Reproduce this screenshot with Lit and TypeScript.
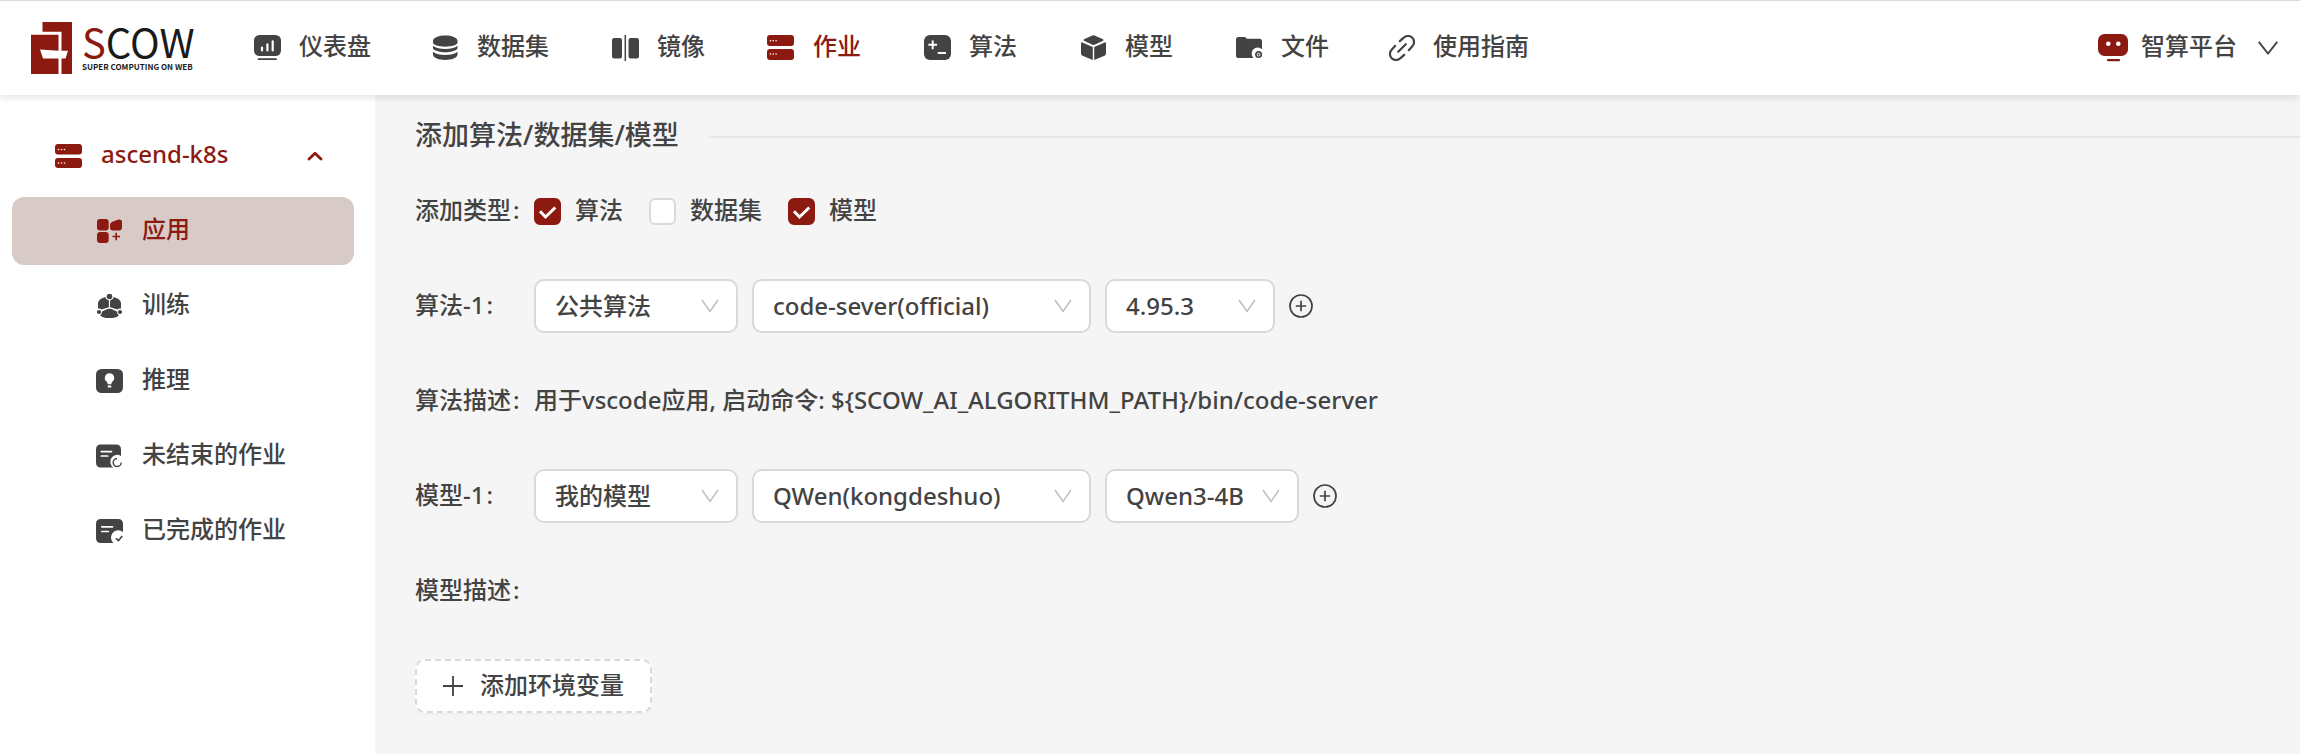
import { LitElement, html, svg, css, nothing, TemplateResult, SVGTemplateResult } from "lit";
import { customElement, property, state } from "lit/decorators.js";
import { classMap } from "lit/directives/class-map.js";

interface Icon {
  width: number;
  height: number;
  body: SVGTemplateResult;
}

const serverBody = svg`
  <rect x="2" width="27" height="11" rx="3"/>
  <rect x="2" y="14" width="27" height="11" rx="3"/>
  <g fill="#fff">
    <circle cx="5.5" cy="5.8" r=".8"/><circle cx="8.3" cy="5.8" r=".8"/><circle cx="11.1" cy="5.8" r=".8"/>
    <circle cx="5.5" cy="19" r=".8"/><circle cx="8.3" cy="19" r=".8"/><circle cx="11.1" cy="19" r=".8"/>
  </g>`;

const icons: Record<string, Icon> = {
  dashboard: {
    width: 28,
    height: 26,
    body: svg`
      <rect x="1" width="27" height="21" rx="5.5"/>
      <path d="M5.5 24.2H23" stroke="currentColor" stroke-width="1.7" stroke-linecap="round"/>
      <path d="M9 12.5v3M14.4 9.3v6.2M19.7 6.3v9.2" stroke="#fff" stroke-width="2.2" stroke-linecap="round"/>`,
  },
  dataset: {
    width: 28,
    height: 26,
    body: svg`
      <path d="M2 6C2-1.4 26.500-1.400 26.500 6V7.500C26.500 13 2 13 2 7.500Z"/>
      <path d="M2 10.800C7 15.200 21.500 15.200 26.500 10.800V13.500C22.500 18.600 6 18.600 2 13.500Z"/>
      <path d="M2 16.800C7 21.200 21.500 21.200 26.500 16.800V19.500C26.500 26.700 2 26.700 2 19.500Z"/>`,
  },
  image: {
    width: 30,
    height: 26,
    body: svg`
      <rect x="3" y="3" width="10" height="20.500" rx="2.200"/>
      <rect x="19.500" y="3" width="10.500" height="20.500" rx="2.200"/>
      <path d="M16.300 0V26" stroke="currentColor" stroke-width="1.500"/>`,
  },
  server: { width: 30, height: 26, body: serverBody },
  algorithm: {
    width: 30,
    height: 26,
    body: svg`
      <rect x="3" width="27" height="25" rx="6"/>
      <path d="M7.300 9.800h8.800M11.700 5.400v8.800M16.800 18h8.200" stroke="#fff" stroke-width="2"/>`,
  },
  model: {
    width: 30,
    height: 26,
    body: svg`
      <path d="M15.400.5Q16.500 0 17.600.500L26 4.300Q27 5 26 5.700L17.500 9.700Q16.500 10.200 15.500 9.700L7 5.700Q6 5 7 4.300Z"/>
      <path d="M4 8.300Q4 6.800 5.300 7.400L15.800 12V25L5.500 20.700Q4 20 4 18.500Z"/>
      <path d="M29 8.300Q29 6.800 27.700 7.400L17.200 12V25L27.500 20.700Q29 20 29 18.500Z"/>`,
  },
  file: {
    width: 30,
    height: 26,
    body: svg`
      <path d="M3 4.500Q3 2 5.500 2H11.500Q13 2 13.700 3.800H26.500Q29 3.800 29 6.500V14.200A6 6 0 0 0 20.500 23H5Q3 23 3 21Z"/>
      <circle cx="25.600" cy="19.600" r="3.500"/>
      <circle cx="25.600" cy="19.600" r="1.400" stroke="#fff" stroke-width="1"/>`,
  },
  link: {
    width: 26,
    height: 26,
    body: svg`
      <g fill="none" stroke="currentColor" stroke-width="2.200" stroke-linecap="round">
        <path d="M9.200 16.800L16.800 9.200"/>
        <path d="M10.800 6.200L14.800 2.700A6 6 0 0 1 23.300 11.200L19.800 15.200"/>
        <path d="M15.200 19.800L11.200 23.300A6 6 0 0 1 2.700 14.800L6.200 10.800"/>
      </g>`,
  },
  robot: {
    width: 30,
    height: 28,
    body: svg`
      <rect width="30" height="22" rx="6.500"/>
      <circle cx="10.300" cy="9.700" r="2.300" fill="#fff"/>
      <circle cx="20.300" cy="9.700" r="2.300" fill="#fff"/>
      <path d="M10 26.200H21" stroke="currentColor" stroke-width="2.200" stroke-linecap="round"/>`,
  },
  cluster: {
    width: 27,
    height: 24,
    body: svg`
      <rect width="27" height="10.500" rx="3"/>
      <rect y="14" width="27" height="10" rx="3"/>
      <g fill="#fff">
        <circle cx="3.500" cy="5.500" r=".8"/><circle cx="6.500" cy="5.500" r=".8"/><circle cx="9.500" cy="5.500" r=".8"/>
        <circle cx="3.500" cy="19" r=".8"/><circle cx="6.500" cy="19" r=".8"/><circle cx="9.500" cy="19" r=".8"/>
      </g>`,
  },
  app: {
    width: 27,
    height: 24,
    body: svg`
      <rect x="1" width="11.700" height="11.500" rx="3"/>
      <rect x="1" y="13" width="11.700" height="11" rx="3"/>
      <path d="M14 6Q14 3.500 16.500 2.700L22.500.5Q26 0 26 3V8.500Q26 11.500 23 11.500H17Q14 11.500 14 8.500Z"/>
      <path d="M16.500 17.500h7.500M20.200 13.800v7.500" stroke="currentColor" stroke-width="1.600"/>`,
  },
  train: {
    width: 27,
    height: 24,
    body: svg`
      <circle cx="13.500" cy="2.500" r="2.800"/>
      <circle cx="3" cy="18" r="2.100"/>
      <circle cx="24" cy="18" r="2.100"/>
      <path d="M9.200 3A4.500 4.500 0 0 0 12.900 6.500V13.300L5.500 15.500A4 4 0 0 0 2 14.500V9Q2.300 5 9.200 3Z"/>
      <path d="M17.800 3A4.500 4.500 0 0 1 14.100 6.500V13.300L21.500 15.500A4 4 0 0 1 25 14.500V9Q24.700 5 17.800 3Z"/>
      <path d="M6 17.500L11.500 15Q13.500 14.300 15.500 15L21 17.500Q21 20.500 23 21.200Q20.500 24 17 24H10Q6.500 24 4 21.200Q6 20.500 6 17.500Z"/>`,
  },
  infer: {
    width: 27,
    height: 24,
    body: svg`
      <rect width="27" height="24" rx="5.500"/>
      <g fill="#fff">
        <path d="M13.500 4.300A4.700 4.700 0 0 1 16.500 12.600Q15.400 13.600 15.200 15.200H11.800Q11.600 13.600 10.500 12.600A4.700 4.700 0 0 1 13.500 4.300Z"/>
        <rect x="11.700" y="16.500" width="3.600" height="1.900" rx=".5"/>
      </g>`,
  },
  running: {
    width: 27,
    height: 24,
    body: svg`
      <path d="M5 .5H20Q25 .5 25 5.500V12A6.300 6.300 0 0 0 17.300 23.500H5Q0 23.500 0 18.500V5.500Q0 .5 5 .5Z"/>
      <path d="M5.300 7.600H15.500M5.300 12H11.700" stroke="#fff" stroke-width="1.700" stroke-linecap="round"/>
      <path d="M21 14.500A4 4 0 1 0 25.200 18.500" fill="none" stroke="currentColor" stroke-width="1.400"/>`,
  },
  finished: {
    width: 27,
    height: 24,
    body: svg`
      <path d="M5 0H22Q27 0 27 5V13A6.300 6.300 0 0 0 17.500 24H5Q0 24 0 19V5Q0 0 5 0Z"/>
      <path d="M5.800 7.800H16.500M5.800 12.500H12.300" stroke="#fff" stroke-width="1.700" stroke-linecap="round"/>
      <path d="M20 19.300L22.500 21.600L26.200 17" fill="none" stroke="currentColor" stroke-width="1.600"/>`,
  },
  plus: {
    width: 20,
    height: 20,
    body: svg`<path d="M10 0V20M0 10H20" stroke="currentColor" stroke-width="1.800"/>`,
  },
  plusCircle: {
    width: 24,
    height: 24,
    body: svg`
      <g fill="none" stroke="currentColor" stroke-width="1.700">
        <circle cx="12" cy="12" r="11"/>
        <path d="M12 6.800V17.200M6.800 12H17.200"/>
      </g>`,
  },
  down: {
    width: 18,
    height: 14,
    body: svg`<path d="M1 1L9 12.500L17 1" fill="none" stroke="currentColor" stroke-width="1.500"/>`,
  },
  bigDown: {
    width: 20,
    height: 14,
    body: svg`<path d="M.8.800L10 12.500L19.200.800" fill="none" stroke="currentColor" stroke-width="1.900"/>`,
  },
  up: {
    width: 16,
    height: 10,
    body: svg`<path d="M2 8L8 2.200L14 8" fill="none" stroke="currentColor" stroke-width="2.800" stroke-linecap="round" stroke-linejoin="round"/>`,
  },
  tick: {
    width: 27,
    height: 27,
    body: svg`<path d="M6 13.300L11.500 19L21.300 9.500" fill="none" stroke="#fff" stroke-width="3"/>`,
  },
};

function icon(name: string): TemplateResult {
  const { width, height, body } = icons[name];
  return html`<svg
    width=${width}
    height=${height}
    viewBox="0 0 ${width} ${height}"
    fill="currentColor"
    aria-hidden="true"
  >${body}</svg>`;
}

const sharedStyles = css`
  :host,
  * {
    box-sizing: border-box;
  }
  svg {
    display: block;
    flex: none;
  }
  a {
    color: inherit;
    text-decoration: none;
  }
  button {
    margin: 0;
    padding: 0;
    border: 0;
    background: none;
    color: inherit;
    font: inherit;
    cursor: pointer;
  }
`;

@customElement("scow-header")
export class ScowHeader extends LitElement {
  static styles = [
    sharedStyles,
    css`
      :host {
        display: flex;
        align-items: center;
        gap: 60px;
        height: 95px;
        padding: 0 22px 0 31px;
        border-top: 1px solid #d9d9d9;
        background: #fff;
        box-shadow: 0 2px 8px rgba(0, 0, 0, 0.12);
        position: relative;
        z-index: 1;
      }
      .logo {
        display: flex;
        gap: 10px;
        color: #8c1a11;
      }
      .words {
        display: flex;
        flex-direction: column;
        gap: 6px;
        width: 111px;
        padding-top: 3px;
        font-family: "Noto Sans CJK SC", sans-serif;
        color: #1a1a1a;
        white-space: nowrap;
      }
      .brand {
        font-size: 40px;
        line-height: 32px;
        font-weight: 400;
      }
      .initial {
        color: #8c1a11;
      }
      .tagline {
        font-size: 8px;
        line-height: 8px;
        font-weight: 700;
      }
      .nav {
        display: flex;
        flex: 1;
        gap: 60px;
      }
      .item,
      .platform {
        display: flex;
        align-items: center;
        gap: 18px;
        white-space: nowrap;
      }
      .active {
        color: #8c1a11;
      }
      .robot {
        color: #8c1a11;
      }
      .platform {
        gap: 13px;
      }
      .text {
        padding-bottom: 4px;
      }
      .name {
        margin-right: 8px;
      }
    `,
  ];

  private items = [
    ["dashboard", "仪表盘"],
    ["dataset", "数据集"],
    ["image", "镜像"],
    ["server", "作业"],
    ["algorithm", "算法"],
    ["model", "模型"],
    ["file", "文件"],
    ["link", "使用指南"],
  ];

  render() {
    return html`
      <a class="logo" href="#" aria-label="SCOW">
        <svg width="41" height="52" viewBox="0 0 41 52" fill="currentColor" aria-hidden="true">
          <path d="M11.500 0H41V52H30.500V9.700H11.500Z" />
          <path d="M0 12.800H27.500V52H0Z" />
          <path d="M9 27.500L27.500 28.800H37L34.500 36.500H12Z" fill="#fff" />
        </svg>
        <span class="words">
          <span class="brand"><span class="initial">S</span>COW</span>
          <span class="tagline">SUPER COMPUTING ON WEB</span>
        </span>
      </a>
      <nav class="nav">
        ${this.items.map(
          ([name, label]) => html`<a
            href="#"
            class=${classMap({ item: true, active: name === "server" })}
            >${icon(name)}<span class="text">${label}</span></a
          >`
        )}
      </nav>
      <button class="platform" type="button">
        <span class="robot">${icon("robot")}</span>
        <span class="text name">智算平台</span>
        ${icon("bigDown")}
      </button>
    `;
  }
}

@customElement("scow-sidebar")
export class ScowSidebar extends LitElement {
  static styles = [
    sharedStyles,
    css`
      :host {
        display: block;
        padding: 27px 21px 0 12px;
        background: #fff;
      }
      .menu {
        display: flex;
        flex-direction: column;
        gap: 7px;
      }
      .group,
      .item {
        display: flex;
        align-items: center;
        height: 68px;
        border-radius: 12px;
        text-align: left;
      }
      .group {
        gap: 19px;
        padding: 0 31px 0 43px;
        color: #8c1a11;
      }
      .label {
        flex: 1;
      }
      .item {
        gap: 19px;
        padding-left: 84px;
      }
      .label,
      .text {
        padding-bottom: 4px;
      }
      .selected {
        background: #d8cac7;
        color: #8c1a11;
      }
    `,
  ];

  private items = [
    ["app", "应用"],
    ["train", "训练"],
    ["infer", "推理"],
    ["running", "未结束的作业"],
    ["finished", "已完成的作业"],
  ];

  render() {
    return html`
      <nav class="menu">
        <button class="group" type="button" aria-expanded="true">
          ${icon("cluster")}<span class="label">ascend-k8s</span>${icon("up")}
        </button>
        ${this.items.map(
          ([name, label]) => html`<a
            href="#"
            class=${classMap({ item: true, selected: name === "app" })}
            >${icon(name)}<span class="text">${label}</span></a
          >`
        )}
      </nav>
    `;
  }
}

@customElement("scow-select")
export class ScowSelect extends LitElement {
  @property() value = "";
  @property() label = "";

  static styles = [
    sharedStyles,
    css`
      :host {
        display: grid;
        align-items: center;
      }
      .control {
        grid-area: 1 / 1;
        width: 100%;
        height: 54px;
        margin: 0;
        padding: 0 18px 0 19px;
        border: 2px solid #d9d9d9;
        border-radius: 10px;
        background: #fff;
        color: inherit;
        font: inherit;
        appearance: none;
      }
      .arrow {
        grid-area: 1 / 1;
        justify-self: end;
        padding-right: 19px;
        color: #bfbfbf;
        pointer-events: none;
      }
    `,
  ];

  render() {
    return html`
      <select class="control" aria-label=${this.label}>
        <option>${this.value}</option>
      </select>
      <span class="arrow">${icon("down")}</span>
    `;
  }
}

@customElement("scow-job-form")
export class ScowJobForm extends LitElement {
  static styles = [
    sharedStyles,
    css`
      :host {
        display: block;
        padding: 20px 0 20px 40px;
        background: #f5f5f5;
      }
      .title {
        display: flex;
        align-items: center;
        gap: 30px;
        margin: 0 0 29px;
        font-size: 27px;
        line-height: 40px;
        font-weight: 500;
      }
      .title::after {
        content: "";
        flex: 1;
        margin-top: 4px;
        border-top: 2px solid #e6e6e6;
      }
      .rows {
        display: flex;
        flex-direction: column;
        gap: 41px;
      }
      .row {
        display: flex;
        align-items: center;
        height: 54px;
      }
      .label {
        flex: none;
        width: 119px;
      }
      .colon {
        margin-left: 2px;
      }
      .label,
      .text {
        padding-bottom: 2px;
      }
      .checks {
        display: flex;
        gap: 26px;
      }
      .check {
        display: flex;
        align-items: center;
        gap: 14px;
      }
      .box {
        display: grid;
      }
      .input {
        grid-area: 1 / 1;
        width: 27px;
        height: 27px;
        margin: 0;
        border: 2px solid #d9d9d9;
        border-radius: 6px;
        background: #fff;
        appearance: none;
      }
      .input:checked {
        border-color: #8c1a11;
        background: #8c1a11;
      }
      .tick {
        grid-area: 1 / 1;
        pointer-events: none;
      }
      .fields {
        display: flex;
        align-items: center;
        gap: 14px;
      }
      .source {
        width: 204px;
      }
      .target {
        width: 339px;
      }
      .version {
        width: 170px;
      }
      .wide {
        width: 194px;
      }
      .add {
        display: flex;
        align-items: center;
        gap: 17px;
        height: 54px;
        padding: 0 26px;
        border: 2px dashed #d9d9d9;
        border-radius: 10px;
        background: #fff;
        box-shadow: 0 2px 0 rgba(0, 0, 0, 0.02);
      }
    `,
  ];

  @state() private types = [
    { name: "算法", checked: true },
    { name: "数据集", checked: false },
    { name: "模型", checked: true },
  ];

  private toggle(index: number) {
    this.types = this.types.map((t, i) => (i === index ? { ...t, checked: !t.checked } : t));
  }

  private label(text: string) {
    return html`<span class="label">${text}<span class="colon">:</span></span>`;
  }

  private resource(label: string, source: string, target: string, version: string, wide = false) {
    return html`
      <div class="row">
        ${this.label(label)}
        <div class="fields">
          <scow-select class="source" label=${label} .value=${source}></scow-select>
          <scow-select class="target" label=${label} .value=${target}></scow-select>
          <scow-select
            class=${classMap({ version: true, wide })}
            label=${label}
            .value=${version}
          ></scow-select>
          <button type="button" aria-label="添加">${icon("plusCircle")}</button>
        </div>
      </div>
    `;
  }

  render() {
    return html`
      <h2 class="title">添加算法/数据集/模型</h2>
      <form class="rows">
        <div class="row">
          ${this.label("添加类型")}
          <div class="checks">
            ${this.types.map(
              (type, i) => html`<label class="check">
                <span class="box">
                  <input
                    class="input"
                    type="checkbox"
                    .checked=${type.checked}
                    @change=${() => this.toggle(i)}
                  />
                  ${type.checked ? html`<span class="tick">${icon("tick")}</span>` : nothing}
                </span>
                <span class="text">${type.name}</span>
              </label>`
            )}
          </div>
        </div>
        ${this.resource("算法-1", "公共算法", "code-sever(official)", "4.95.3")}
        <div class="row">
          ${this.label("算法描述")}
          <span class="text">用于vscode应用, 启动命令: \${SCOW_AI_ALGORITHM_PATH}/bin/code-server</span>
        </div>
        ${this.resource("模型-1", "我的模型", "QWen(kongdeshuo)", "Qwen3-4B", true)}
        <div class="row">${this.label("模型描述")}</div>
        <div class="row">
          <button class="add" type="button">${icon("plus")}<span class="text">添加环境变量</span></button>
        </div>
      </form>
    `;
  }
}

@customElement("app-root")
export class AppRoot extends LitElement {
  static styles = css`
    :host {
      display: flex;
      flex-direction: column;
      min-height: 100vh;
      background: #f5f5f5;
      color: #434343;
      font-family: "Noto Sans", "Noto Sans CJK SC", sans-serif;
      font-size: 24px;
      line-height: 36px;
      font-weight: 500;
    }
    .body {
      display: flex;
      flex: 1;
    }
    .side {
      flex: none;
      width: 375px;
    }
    .main {
      flex: 1;
      min-width: 0;
    }
  `;

  render() {
    return html`
      <scow-header></scow-header>
      <div class="body">
        <scow-sidebar class="side"></scow-sidebar>
        <scow-job-form class="main"></scow-job-form>
      </div>
    `;
  }
}
